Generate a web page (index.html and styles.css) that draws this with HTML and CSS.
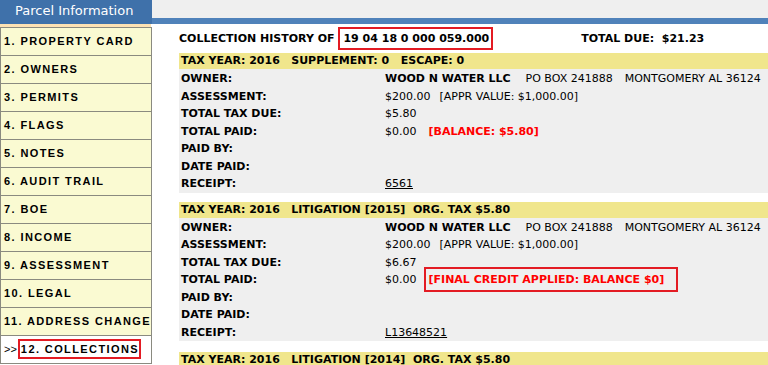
FILE: index.html
```html
<!doctype html>
<html lang="en">
  <head>
    <meta charset="UTF-8" />
    <title>Parcel Information - Collections</title>
    <link rel="stylesheet" href="styles.css">
  </head>
  <body>
    <div class="layout">
      <aside class="sidebar">
        <div class="tab">Parcel Information</div>
        <div class="tab-edge"></div>
        <ul class="menu">
          <li>1. PROPERTY CARD</li>
          <li>2. OWNERS</li>
          <li>3. PERMITS</li>
          <li>4. FLAGS</li>
          <li>5. NOTES</li>
          <li>6. AUDIT TRAIL</li>
          <li>7. BOE</li>
          <li>8. INCOME</li>
          <li>9. ASSESSMENT</li>
          <li>10. LEGAL</li>
          <li>11. ADDRESS CHANGE</li>
          <li class="active"><span class="arrow">&gt;&gt;</span><span class="menu-mark">12. COLLECTIONS</span></li>
        </ul>
      </aside>

      <main class="main">
        <div class="topbar"></div>
        <div class="content">
          <div class="summary">
            <span class="summary-title">COLLECTION HISTORY OF </span><span class="parcel-id">19 04 18 0 000 059.000</span>
            <span class="total-due">TOTAL DUE:&nbsp; $21.23</span>
          </div>

          <section class="record">
            <div class="record-head">TAX YEAR: 2016   SUPPLEMENT: 0   ESCAPE: 0</div>
            <div class="record-body">
              <div class="label">OWNER:</div>
              <div class="value"><b>WOOD N WATER LLC</b><span class="gap-lg">PO BOX 241888</span><span class="gap-md">MONTGOMERY AL 36124</span></div>
              <div class="label">ASSESSMENT:</div>
              <div class="value">$200.00<span class="gap-sm">[APPR VALUE: $1,000.00]</span></div>
              <div class="label">TOTAL TAX DUE:</div>
              <div class="value">$5.80</div>
              <div class="label">TOTAL PAID:</div>
              <div class="value">$0.00<span class="balance">[BALANCE: $5.80]</span></div>
              <div class="label">PAID BY:</div>
              <div class="value"></div>
              <div class="label">DATE PAID:</div>
              <div class="value"></div>
              <div class="label">RECEIPT:</div>
              <div class="value"><a class="receipt" href="#">6561</a></div>
            </div>
          </section>

          <section class="record record-wide">
            <div class="record-head">TAX YEAR: 2016   LITIGATION [2015]  ORG. TAX $5.80</div>
            <div class="record-body">
              <div class="label">OWNER:</div>
              <div class="value"><b>WOOD N WATER LLC</b><span class="gap-lg">PO BOX 241888</span><span class="gap-md">MONTGOMERY AL 36124</span></div>
              <div class="label">ASSESSMENT:</div>
              <div class="value">$200.00<span class="gap-sm">[APPR VALUE: $1,000.00]</span></div>
              <div class="label">TOTAL TAX DUE:</div>
              <div class="value">$6.67</div>
              <div class="label">TOTAL PAID:</div>
              <div class="value">$0.00<span class="balance marked">[FINAL CREDIT APPLIED: BALANCE $0]</span></div>
              <div class="label">PAID BY:</div>
              <div class="value"></div>
              <div class="label">DATE PAID:</div>
              <div class="value"></div>
              <div class="label">RECEIPT:</div>
              <div class="value"><a class="receipt" href="#">L13648521</a></div>
            </div>
          </section>

          <section class="record">
            <div class="record-head">TAX YEAR: 2016   LITIGATION [2014]  ORG. TAX $5.80</div>
          </section>
        </div>
      </main>
    </div>
  </body>
</html>
```

FILE: styles.css
```css
html,
body {
  margin: 0;
  height: 100%;
  overflow: hidden;
  background: #fff;
}
body {
  font-family: 'DejaVu Sans', Verdana, sans-serif;
  font-size: 11px;
  color: #000;
}
.layout {
  display: flex;
  align-items: flex-start;
}

/* --- Left menu --- */
.sidebar {
  width: 152px;
  flex: none;
}
.tab {
  height: 24px;
  line-height: 22px;
  padding-left: 15px;
  background-color: #3f71aa;
  color: #fff;
  font-size: 13px;
}
.tab-edge {
  height: 3px;
  margin-right: 1px;
  background-color: #fde2b4;
}
.menu {
  list-style: none;
  margin: 0;
  padding: 0;
  width: 150px;
  border: 1px solid #8a8a80;
  border-bottom: none;
  background-color: #fafad2;
}
.menu li {
  height: 27px;
  line-height: 27px;
  padding-left: 3px;
  border-bottom: 1px solid #8a8a80;
  font-family: 'Liberation Sans', Arial, sans-serif;
  font-weight: bold;
  font-size: 11px;
  letter-spacing: 1.4px;
  white-space: nowrap;
}
.menu li.active {
  background-color: #fff;
}
.arrow {
  font-weight: normal;
  letter-spacing: 0;
  margin-right: 1px;
}
.menu-mark {
  display: inline-block;
  line-height: 16px;
  padding: 0 0 0 1px;
  border: 2px solid #e31b23;
}

/* --- Main panel --- */
.main {
  flex: 1;
  min-width: 0;
}
.topbar {
  height: 18px;
  background-color: #efefef;
  border-bottom: 6px solid #5082ba;
}
.content {
  padding: 3px 0 0 27px;
}
.summary {
  display: flex;
  align-items: center;
  height: 23px;
  margin-bottom: 3px;
  font-weight: bold;
  white-space: pre;
}
.parcel-id {
  display: inline-block;
  line-height: 19px;
  padding: 0 2px 0 3px;
  border: 2px solid #e31b23;
}
.total-due {
  margin-left: 88px;
}

.record {
  margin-bottom: 9px;
}
.record-wide {
  margin-bottom: 11px;
}
.record-head {
  height: 16px;
  line-height: 16px;
  padding-left: 2px;
  background-color: #f0e68c;
  font-weight: bold;
  white-space: pre;
}
.record-body {
  display: grid;
  grid-template-columns: 204px 1fr;
  grid-auto-rows: 17.5px;
  align-items: center;
  padding: 1px 0 0 2px;
  background-color: #efefef;
  white-space: nowrap;
}
.label {
  font-weight: bold;
}
.gap-sm {
  margin-left: 9px;
}
.gap-md {
  margin-left: 12px;
}
.gap-lg {
  margin-left: 15px;
}
.balance {
  margin-left: 12px;
  color: #ff0000;
  font-weight: bold;
}
.balance.marked {
  display: inline-block;
  line-height: 17px;
  padding: 0 10px 0 1px;
  margin-left: 11px;
  outline: 2px solid #e31b23;
  outline-offset: 2px;
}
.receipt {
  color: #000;
  text-decoration: underline;
}
```
